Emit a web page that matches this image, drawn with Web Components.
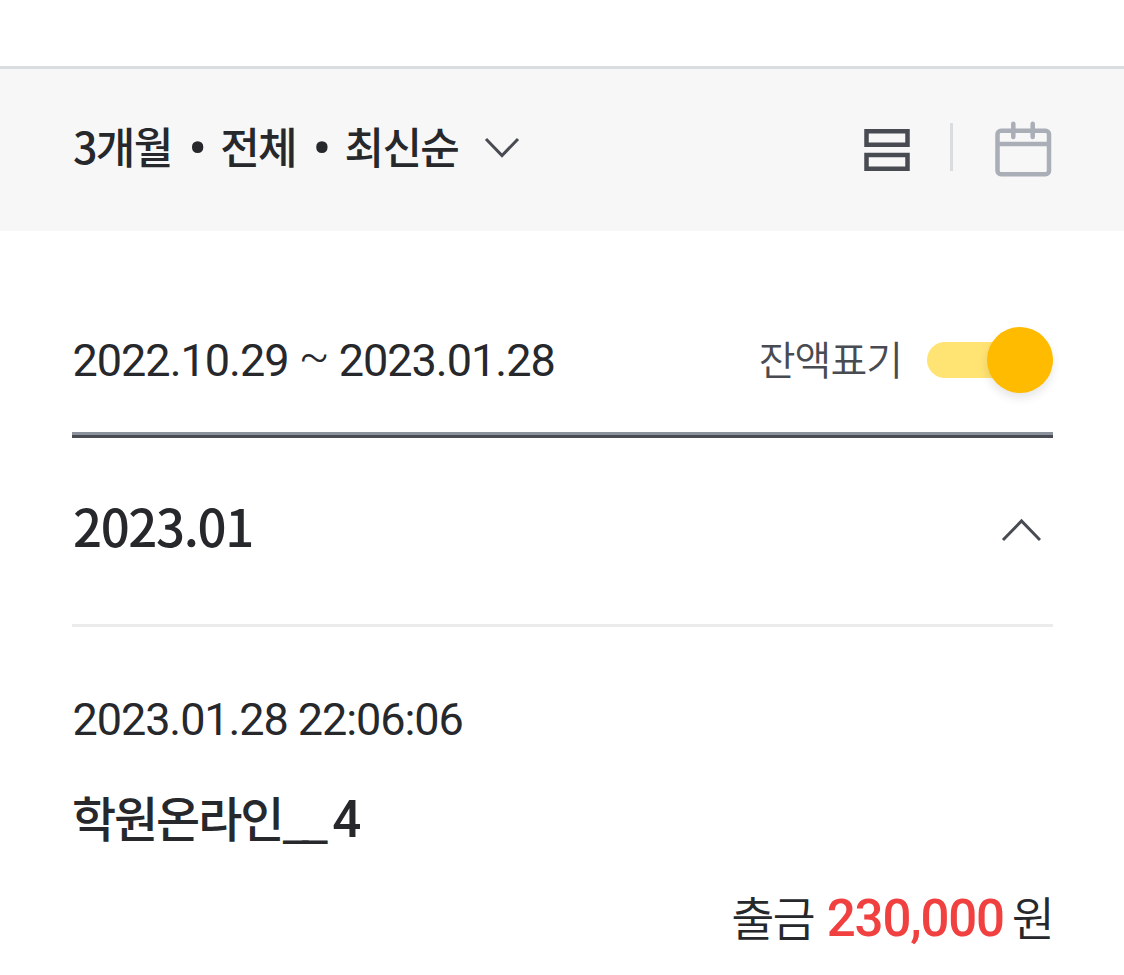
<!DOCTYPE html>
<html lang="ko">
<head>
<meta charset="utf-8">
<title>거래내역</title>
<style>
	body {
		margin: 0;
		background: white;
		color: #26282c;
		font-family: Roboto, 'Noto Sans CJK KR', sans-serif;
		--kr-font: 'Noto Sans CJK KR', sans-serif;
		--dark: #484b51;
	}
</style>
</head>
<body>
<history-page>
	<filter-bar slot="filter">3개월 <b>•</b> 전체 <b>•</b> 최신순</filter-bar>
	<period-row>
		2022.10.29 <i>~</i> 2023.01.28
		<toggle-switch slot="option">잔액표기</toggle-switch>
	</period-row>
	<month-group>
		<span slot="month">2023.01</span>
		<history-item>
			<span slot="time">2023.01.28 22:06:06</span>
			<span slot="name">학원온라인</span>
			<span slot="blank">__</span>
			<span slot="suffix">4</span>
			<span slot="type">출금</span>
			<span slot="amount">230,000</span>
			<span slot="unit">원</span>
		</history-item>
	</month-group>
</history-page>

<script>
class HistoryPage extends HTMLElement {
	constructor() {
		super();
		this.attachShadow({ mode: 'open' });
		this.shadowRoot.innerHTML = `
		<style>
		:host {
			display: block;
			height: 975px;
			overflow: hidden;
			padding-top: 66px;
			box-sizing: border-box;
		}

		main {
			padding: 0 71px 0 72px;
		}
		</style>
		<slot name="filter"></slot>
		<main><slot></slot></main>
		`;
	}
}

class FilterBar extends HTMLElement {
	constructor() {
		super();
		this.attachShadow({ mode: 'open' });
		this.shadowRoot.innerHTML = `
		<style>
		:host {
			display: flex;
			align-items: center;
			height: 165px;
			box-sizing: border-box;
			padding: 0 72px 0 73px;
			border-top: 3px solid #dadddf;
			background: #f7f7f7;
		}

		.label {
			font: 500 43px/60px var(--kr-font);
			letter-spacing: -1.7px;
			white-space: nowrap;
			margin-bottom: 11px;
		}

		::slotted(b) {
			font: 500 52px/1 Roboto, sans-serif;
			margin: 0 5px 0 6.5px;
			position: relative;
			top: 2.5px;
		}

		svg {
			display: block;
			fill: none;
		}

		.arrow {
			margin: 0 0 4px 26px;
		}

		.views {
			display: flex;
			align-items: center;
			margin: 0 0 6px auto;
		}

		.line {
			width: 3px;
			height: 48px;
			margin: 0 42px 0 39px;
			background: #dadddf;
		}
		</style>
		<div class="label"><slot></slot></div>
		<svg class="arrow" width="36" height="24" viewBox="0 0 36 24" stroke="#484b51" stroke-width="3">
			<path d="M2 3 18 19.500 34 3" />
		</svg>
		<div class="views">
			<svg width="47" height="50" viewBox="0 0 47 50" stroke="#484b51" stroke-width="4.500">
				<path d="M2.500 9.200H43.500V22.700H2.500ZM2.500 33H43.500V46.700H2.500Z" />
			</svg>
			<div class="line"></div>
			<svg width="57" height="60" viewBox="0 0 57 60" stroke="#a9aeb7" stroke-width="4.500" stroke-linecap="round">
				<rect x="2.500" y="13.800" width="51.500" height="43.400" rx="3.500" />
				<path d="M3 27H54M18.300 6.800V20M37.700 6.800V20" />
			</svg>
		</div>
		`;
	}
}

class PeriodRow extends HTMLElement {
	constructor() {
		super();
		this.attachShadow({ mode: 'open' });
		this.shadowRoot.innerHTML = `
		<style>
		:host {
			display: flex;
			justify-content: space-between;
			align-items: center;
			height: 207px;
			box-sizing: border-box;
			padding-top: 54px;
			border-bottom: 3px solid var(--dark);
			box-shadow: inset 0 -3px #8b929b;
		}

		.period {
			font-size: 45px;
			line-height: 60px;
			letter-spacing: -1px;
			white-space: nowrap;
			padding: 2px 0 0 0.5px;
		}

		::slotted(i) {
			font-style: normal;
			font-weight: 300;
			line-height: 1;
			position: relative;
			top: -5px;
		}
		</style>
		<div class="period"><slot></slot></div>
		<slot name="option"></slot>
		`;
	}
}

class ToggleSwitch extends HTMLElement {
	constructor() {
		super();
		this.attachShadow({ mode: 'open' });
		this.shadowRoot.innerHTML = `
		<style>
		:host {
			display: flex;
			align-items: center;
			gap: 25px;
			font: 350 40px/60px var(--kr-font);
			letter-spacing: -1px;
			color: var(--dark);
		}

		.label {
			padding-bottom: 4px;
		}

		.track {
			display: flex;
			align-items: center;
			justify-content: flex-end;
			width: 126px;
			height: 36px;
			border-radius: 18px;
			background: #ffe373;
		}

		.thumb {
			width: 66px;
			height: 66px;
			border-radius: 50%;
			background: #ffbb00;
			box-shadow: 0 5px 10px rgba(0, 0, 0, 0.1);
		}
		</style>
		<div class="label"><slot></slot></div>
		<div class="track"><div class="thumb"></div></div>
		`;
	}
}

class MonthGroup extends HTMLElement {
	constructor() {
		super();
		this.attachShadow({ mode: 'open' });
		this.shadowRoot.innerHTML = `
		<style>
		:host {
			display: block;
		}

		header {
			display: flex;
			justify-content: space-between;
			align-items: center;
			height: 189px;
			box-sizing: border-box;
			padding: 0 12px 3px 1px;
			border-bottom: 3px solid #ebebeb;
			font: 500 51px/70px var(--kr-font);
			letter-spacing: -1.4px;
		}

		.month {
			padding-bottom: 9px;
		}

		svg {
			display: block;
			fill: none;
		}
		</style>
		<header>
			<div class="month"><slot name="month"></slot></div>
			<svg width="40" height="24" viewBox="0 0 40 24" stroke="#484b51" stroke-width="3">
				<path d="M2 22 20.500 3 39 22" />
			</svg>
		</header>
		<slot></slot>
		`;
	}
}

class HistoryItem extends HTMLElement {
	constructor() {
		super();
		this.attachShadow({ mode: 'open' });
		this.shadowRoot.innerHTML = `
		<style>
		:host {
			display: block;
			padding-top: 63px;
			white-space: nowrap;
		}

		.time {
			padding-left: 0.5px;
			font-size: 45px;
			line-height: 60px;
			letter-spacing: -1.08px;
		}

		.name {
			display: flex;
			align-items: baseline;
			height: 70px;
			margin-top: 31px;
			font: 500 48px/70px var(--kr-font);
			letter-spacing: -2.1px;
		}

		.blank {
			letter-spacing: -8px;
		}

		.suffix {
			margin-left: 12px;
			font: 500 51px/70px Roboto, sans-serif;
		}

		.money {
			display: flex;
			justify-content: flex-end;
			align-items: baseline;
			margin-top: 30px;
			font: 350 47px/70px var(--kr-font);
			letter-spacing: -2px;
		}

		.amount {
			margin: 0 8px 0 13px;
			font: 500 51px/70px Roboto, sans-serif;
			letter-spacing: -1.2px;
			color: #f04040;
		}
		</style>
		<div class="time"><slot name="time"></slot></div>
		<div class="name">
			<slot name="name"></slot>
			<div class="blank"><slot name="blank"></slot></div>
			<div class="suffix"><slot name="suffix"></slot></div>
		</div>
		<div class="money">
			<slot name="type"></slot>
			<div class="amount"><slot name="amount"></slot></div>
			<slot name="unit"></slot>
		</div>
		`;
	}
}

customElements.define('history-page', HistoryPage);
customElements.define('filter-bar', FilterBar);
customElements.define('period-row', PeriodRow);
customElements.define('toggle-switch', ToggleSwitch);
customElements.define('month-group', MonthGroup);
customElements.define('history-item', HistoryItem);
</script>
</body>
</html>
